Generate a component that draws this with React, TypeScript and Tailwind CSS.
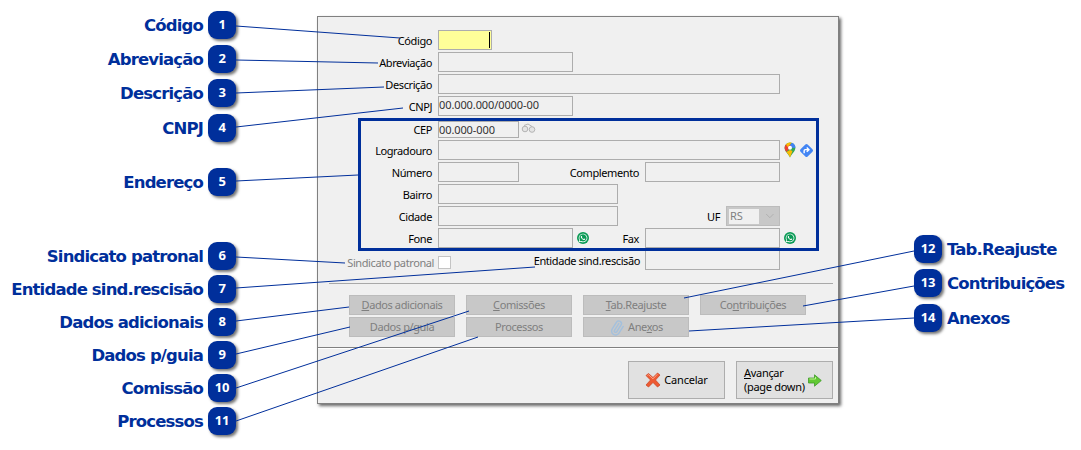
import React from "react";
import { FaWhatsapp } from "react-icons/fa";
import { Paperclip, ChevronDown } from "lucide-react";

const lines: [number, number, number, number][] = [
  [236, 26, 400, 38], [236, 60, 378, 63], [236, 93, 384, 87], [236, 127, 403, 108], [236, 181, 358, 175],
  [236, 257, 345, 263], [236, 288, 535, 267], [236, 321, 349, 307], [236, 354, 350, 327], [236, 388, 469, 311],
  [236, 421, 478, 337], [914, 251, 684, 298], [914, 286, 803, 306], [914, 318, 689, 331],
];

const left: [string, number, number][] = [
  ["Código", 1, 11], ["Abreviação", 2, 45], ["Descrição", 3, 79], ["CNPJ", 4, 114], ["Endereço", 5, 168],
  ["Sindicato patronal", 6, 242], ["Entidade sind.rescisão", 7, 275], ["Dados adicionais", 8, 308],
  ["Dados p/guia", 9, 341], ["Comissão", 10, 374], ["Processos", 11, 407],
];
const right: [string, number, number][] = [["Tab.Reajuste", 12, 235], ["Contribuições", 13, 269], ["Anexos", 14, 304]];

function Badge({ n }: { n: number }) {
  return (
    <div className="flex h-7 w-7 shrink-0 items-center justify-center rounded-[9px] bg-[#002f9b] font-['Noto_Sans',sans-serif] text-[13px] font-bold tracking-[-0.3px] text-white shadow-[2px_2px_3px_rgba(0,0,0,0.55)]">
      {n}
    </div>
  );
}

function Field({ w, h = "h-5", children, className = "" }: { w: string; h?: string; children?: React.ReactNode; className?: string }) {
  return (
    <div className={`${w} ${h} shrink-0 overflow-hidden border border-[#adadad] bg-[#f0f0f0] text-[11px] leading-[15px] tracking-[-0.1px] text-[#333] ${className}`}>
      {children}
    </div>
  );
}

function Label({ w, children, className = "" }: { w: string; children: React.ReactNode; className?: string }) {
  return <div className={`${w} shrink-0 pr-1.5 pt-0.5 text-right text-[11px] leading-4 tracking-[-0.4px] ${className}`}>{children}</div>;
}

function Whats() {
  return (
    <span className="ml-[4px] flex h-[12px] w-[12px] items-center justify-center rounded-full bg-[#0a9a55] text-white">
      <FaWhatsapp size={10} />
    </span>
  );
}

function Btn({ children }: { children: React.ReactNode }) {
  return (
    <div className="flex h-5 items-center justify-center border border-[#bcbcbc] bg-[#c8c8c8] pt-px text-[11px] tracking-[-0.4px] text-[#7f7f7f]">
      {children}
    </div>
  );
}

export default function App() {
  return (
    <div className="relative h-[450px] w-[1081px] overflow-hidden bg-white font-['Noto_Sans',sans-serif] text-black">
      {left.map(([t, n, y]) => (
        <div key={n} className="absolute left-0 flex w-[236px] items-center justify-end gap-[5px]" style={{ top: y }}>
          <span className="whitespace-nowrap pt-0.5 font-['DejaVu_Sans',sans-serif] text-[16.5px] font-bold tracking-[-0.85px] text-[#002f9b]">{t}</span>
          <Badge n={n} />
        </div>
      ))}
      {right.map(([t, n, y]) => (
        <div key={n} className="absolute left-[914px] flex items-center gap-[5px]" style={{ top: y }}>
          <Badge n={n} />
          <span className="whitespace-nowrap pt-0.5 font-['DejaVu_Sans',sans-serif] text-[16.5px] font-bold tracking-[-0.85px] text-[#002f9b]">{t}</span>
        </div>
      ))}

      <div className="absolute left-[317px] top-4 flex h-[388px] w-[522px] flex-col border border-[#808080] bg-[#f0f0f0] shadow-[2px_2px_3px_rgba(0,0,0,0.6)]">
        <div className="h-[331px] shrink-0 border-b border-[#808080] pt-[13px] pb-2.5">
          <div className="flex flex-col gap-0.5">
            <div className="flex items-center">
              <Label w="w-[120px]">Código</Label>
              <Field w="w-[54px]" className="relative !bg-[#ffff99]">
                <span className="absolute left-[50px] top-px h-4 w-px bg-black" />
              </Field>
            </div>
            <div className="flex items-center">
              <Label w="w-[120px]">Abreviação</Label>
              <Field w="w-[135px]" />
            </div>
            <div className="flex items-center">
              <Label w="w-[120px]">Descrição</Label>
              <Field w="w-[342px]" />
            </div>
            <div className="flex items-center">
              <Label w="w-[120px]">CNPJ</Label>
              <Field w="w-[135px]">00.000.000/0000-00</Field>
            </div>
          </div>

          <div className="relative z-10 ml-[40px] mt-0.5 flex h-[133px] w-[461px] flex-col gap-0.5 border-[3px] border-[#002f9b]">
            <div className="flex h-[17px] items-center">
              <Label w="w-[77px]" className="!pt-0">CEP</Label>
              <Field w="w-[81px]" h="h-[17px]" className="leading-[14px]">00.000-000</Field>
              <svg className="ml-[2px] -mt-[3px]" width="15" height="10" viewBox="0 0 15 10" fill="none" stroke="#b4b4b4">
                <circle cx="4" cy="6" r="2.8" fill="#e4e4e4" />
                <circle cx="11" cy="6.5" r="2.8" fill="#e4e4e4" />
                <path d="M3 2.5 L7 1 L11 3.5" />
              </svg>
            </div>
            <div className="flex items-center">
              <Label w="w-[77px]">Logradouro</Label>
              <Field w="w-[342px]" />
              <svg className="ml-[4px]" width="12" height="16" viewBox="0 0 12 16">
                <path d="M6 15.5C4.8 12.5 .6 9.5 .6 5.8A5.4 5.4 0 0 1 6 .4a5.4 5.4 0 0 1 5.4 5.4c0 3.7-4.2 6.7-5.4 9.7z" fill="#34a853" />
                <path d="M2 2.2A5.4 5.4 0 0 0 .6 5.8c0 1.6.8 3 1.8 4.3L9 3z" fill="#ea4335" />
                <path d="M2 2.2A5.4 5.4 0 0 1 6 .4 5 5 0 0 1 8 .8L3.5 5z" fill="#fbbc04" />
                <path d="M8 .8a5.4 5.4 0 0 1 3.4 5L8.500 6 6 3z" fill="#4285f4" />
                <path d="M2.400 10.100C3.600 11.800 5.300 13.500 6 15.500L8.500 9 6 8z" fill="#fbbc04" />
                <circle cx="6" cy="5.800" r="2" fill="#fff" />
              </svg>
              <svg className="ml-[3px]" width="15" height="15" viewBox="0 0 14 14">
                <rect x="2.300" y="2.300" width="9.400" height="9.400" rx="1.500" transform="rotate(45 7 7)" fill="#4285f4" />
                <path d="M4.800 9.500V7.200q0-1 1-1H8.500M7.200 4.200l2.100 2-2.100 2" fill="none" stroke="#fff" strokeWidth="1.300" />
              </svg>
            </div>
            <div className="flex items-center">
              <Label w="w-[77px]">Número</Label>
              <Field w="w-[81px]" />
              <Label w="w-[126px]">Complemento</Label>
              <Field w="w-[135px]" />
            </div>
            <div className="flex items-center">
              <Label w="w-[77px]">Bairro</Label>
              <Field w="w-[180px]" />
            </div>
            <div className="flex items-center">
              <Label w="w-[77px]">Cidade</Label>
              <Field w="w-[180px]" />
              <Label w="w-[108px]">UF</Label>
              <div className="flex h-5 w-[54px] shrink-0 items-center border border-[#bcbcbc] bg-[#c8c8c8] p-[2px]">
                <div className="flex h-[15px] w-[31px] items-center bg-[#f0f0f0] pl-px text-[11px] text-[#808080]">RS</div>
                <ChevronDown className="ml-[4px] text-[#a0a0a0]" size={14} strokeWidth={1} />
              </div>
            </div>
            <div className="flex items-center">
              <Label w="w-[77px]">Fone</Label>
              <Field w="w-[135px]" />
              <Whats />
              <Label w="w-[56px]">Fax</Label>
              <Field w="w-[135px]" />
              <Whats />
            </div>
          </div>

          <div className="-mt-px flex h-5 items-center">
            <Label w="w-[120px]" className="mt-1 pr-[4px] text-[#808080]">Sindicato patronal</Label>
            <div className="mt-1 h-[13px] w-[13px] shrink-0 border border-[#c4c4c4] bg-white" />
            <Label w="w-[194px]" className="pr-[5px]">Entidade sind.rescisão</Label>
            <Field w="w-[135px]" />
          </div>

          <div className="ml-[11px] mt-[13px] h-px w-[504px] bg-[#a8a8a8]" />

          <div className="ml-[31px] mt-[11px] grid w-[457px] grid-cols-4 gap-x-[11px] gap-y-0.5">
            <Btn><span><u>D</u>ados adicionais</span></Btn>
            <Btn><span><u>C</u>omissões</span></Btn>
            <Btn><span><u>T</u>ab.Reajuste</span></Btn>
            <Btn><span>Co<u>n</u>tribuições</span></Btn>
            <Btn><span>Dados p/<u>g</u>uia</span></Btn>
            <Btn><span>Processos</span></Btn>
            <Btn>
              <Paperclip className="mr-[3px] -rotate-12 text-[#a4c0dc]" size={16} strokeWidth={2.2} />
              <span>Ane<u>x</u>os</span>
            </Btn>
          </div>
        </div>

        <div className="flex flex-1 items-start justify-end gap-[11px] border-t border-white pt-[12px] pr-[5px]">
          <div className="flex h-[38px] w-[97px] items-center justify-center gap-[3px] border border-[#adadad] bg-[#e1e1e1] text-[11px] tracking-[-0.2px]">
            <svg width="16" height="16" viewBox="0 0 16 16">
              <path d="M1 3.500 3.500 1.500 8 5.500 12.500 1 15 3 10.500 8 15 13 12.500 15 8 10.500 3.500 15 1 13 5.500 8z" fill="#ee5a32" stroke="#c8401f" strokeWidth=".7" strokeLinejoin="round" />
              <path d="M2.500 3.500 3.500 2.700 8 6.800 12.300 2.300" fill="none" stroke="#ffb49c" strokeWidth=".8" />
            </svg>
            <span>Cancelar</span>
          </div>
          <div className="flex h-[38px] w-[97px] items-center justify-between border border-[#adadad] bg-[#e1e1e1] pl-[7px] pr-[10px] text-[11px] leading-[14px] tracking-[-0.3px]">
            <div>
              <div><u>A</u>vançar</div>
              <div>(page down)</div>
            </div>
            <svg width="14" height="13" viewBox="0 0 14 13">
              <path d="M.5 4H6.500V.8L13.300 6.500 6.500 12.200V9H.5z" fill="#62c934" stroke="#3f9a2a" strokeWidth=".8" strokeLinejoin="round" />
              <path d="M1.500 5H7.500V3" fill="none" stroke="#c9f59a" strokeWidth=".9" />
            </svg>
          </div>
        </div>
      </div>

      <svg className="pointer-events-none absolute inset-0 z-20" width="1081" height="450">
        {lines.map(([a, b, c, d], i) => (
          <line key={i} x1={a} y1={b} x2={c} y2={d} stroke="#002f9b" strokeWidth="1" />
        ))}
      </svg>
    </div>
  );
}
